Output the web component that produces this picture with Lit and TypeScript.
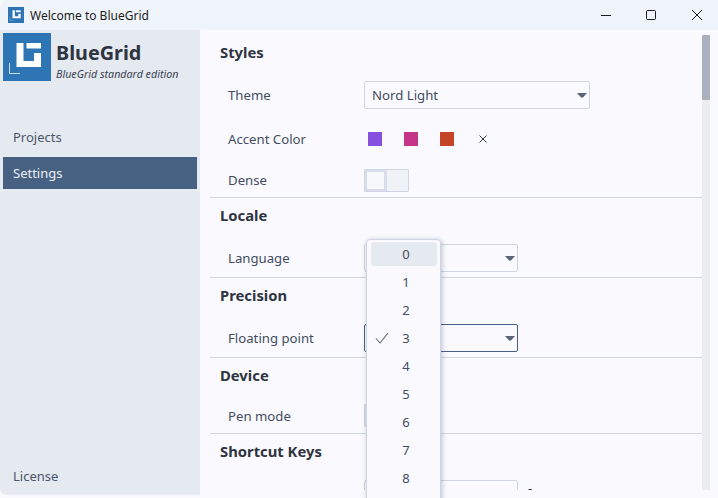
import { LitElement, html, css, svg } from "lit";
import { customElement } from "lit/decorators.js";

const logo = (size: number) => html`<svg width=${size} height=${size} viewBox="0 0 48 48">
  <rect width="48" height="48" fill="#2e75b6"></rect>
  <path d="M13.5 10h7v18h10.500V20h7v14h-24.500z" fill="#fff"></path>
  <path d="M23.500 10h14.500v5.500h-14.500z" fill="#fff"></path>
  <path d="M6.500 30v10.500H17" fill="none" stroke="#fff" stroke-opacity=".75"></path>
</svg>`;

const caret = svg`<path d="M0 0h10L6 4.500h-2z" fill="#5a6478"></path>`;

@customElement("app-root")
export class AppRoot extends LitElement {
  static styles = css`
    :host {
      display: block;
      position: relative;
      width: 718px;
      height: 498px;
      overflow: hidden;
      background: #fafafe;
      color: #2e3440;
      font-family: "Noto Sans", sans-serif;
      font-size: 13px;
    }
    .title {
      height: 30px;
      background: #eff4fa;
      display: flex;
      align-items: center;
      padding-left: 8px;
      gap: 6px;
      font-size: 12px;
      color: #1c1c1c;
      border-top-left-radius: 7px;
    }
    .title svg { display: block; }
    .title .name { flex: 1; }
    .win { display: flex; margin-right: -2px; }
    .win button {
      all: unset;
      width: 45.500px;
      height: 30px;
      display: flex;
      align-items: center;
      justify-content: center;
    }
    .win button:nth-child(2) { transform: translateX(-1px); }
    .body { display: flex; align-items: flex-start; height: 465px; }
    .side {
      width: 200px;
      height: 465px;
      background: #e5e9f0;
      display: flex;
      flex-direction: column;
      border-bottom-left-radius: 7px;
    }
    .brand { display: flex; gap: 5px; padding: 3px 0 0 3px; height: 48px; }
    .brand svg { display: block; }
    .brand-text { display: flex; flex-direction: column; }
    .brand-name { font-size: 19.800px; font-weight: 700; line-height: 27px; margin-top: 6px; }
    .brand-sub { font-size: 10.700px; font-style: italic; line-height: 14px; margin-top: 1px; color: #3b4252; }
    .nav { margin-top: 40px; padding: 0 3px; display: flex; flex-direction: column; gap: 4px; flex: 1; }
    .nav div { height: 32px; line-height: 32px; padding-left: 10px; color: #4c566a; }
    .nav .on { background: #466182; color: #eceff4; }
    .nav .end { margin-top: auto; margin-bottom: 3px; }
    .main { flex: 1; height: 460px; overflow: hidden; position: relative; padding-left: 10px; padding-right: 16px; }
    section { border-bottom: 1px solid #cfd5e2; padding-bottom: 5px; padding-top: 6px; display: flex; flex-direction: column; }
    section:first-child { padding-top: 11px; }
    section:last-child { border-bottom: 0; }
    section.tall { padding-bottom: 6px; }
    h2 {
      margin: 0 0 18px 10px;
      font-size: 14.800px;
      line-height: 22px;
      font-weight: 700;
    }
    .rows { display: flex; flex-direction: column; gap: 16px; }
    .row { display: flex; align-items: center; min-height: 23px; padding-left: 18px; }
    .row label { width: 136px; color: #434c5e; font-size: 13.200px; }
    .row.up label { margin-bottom: 2px; }
    .select {
      box-sizing: border-box;
      width: 154px;
      height: 28px;
      border: 1px solid #cfd5e2;
      border-radius: 2px;
      display: flex;
      align-items: center;
      justify-content: space-between;
      padding: 0 2px 0 7px;
      color: #434c5e;
      font-size: 13.200px;
    }
    .select.wide { width: 226px; }
    .select.focus { border-color: #466182; }
    .swatches { display: flex; align-items: center; height: 28px; gap: 22px; padding-left: 4px; }
    .sw { width: 14px; height: 14px; }
    .sw.a { background: #8450dd; }
    .sw.b { background: #c43487; }
    .sw.c { background: #c44426; }
    .toggle {
      box-sizing: border-box;
      width: 45px;
      height: 23px;
      border: 1px solid #cfd5e2;
      border-radius: 1px;
      background: #eff2f6;
      display: flex;
    }
    .knob {
      width: 17px;
      height: 17px;
      background: #f6f8fa;
      border: 2px solid #d8dee9;
      border-right-width: 3px;
    }
    .short { display: flex; align-items: flex-start; padding-left: 18px; }
    .short label { width: 136px; }
    .input { box-sizing: border-box; width: 154px; height: 28px; border: 1px solid #cfd5e2; border-radius: 2px; flex: none; margin-right: 10px; }
    .dash { line-height: 16px; font-size: 13px; }
    .scroll {
      position: absolute;
      right: 8px;
      top: 5px;
      bottom: 0;
      width: 8px;
      background: #ebecef;
    }
    .thumb { height: 65px; background: #abb0bf; border-radius: 1px; }
    .popup {
      position: absolute;
      left: 366px;
      top: 239px;
      width: 75px;
      height: 290px;
      box-sizing: border-box;
      background: #fafafe;
      border: 1px solid #cfd5e2;
      border-radius: 4px;
      box-shadow: 1px 1px 5px rgba(70, 90, 130, 0.35);
      padding: 2px 3px 0 4px;
      display: flex;
      flex-direction: column;
      gap: 4px;
    }
    .item {
      box-sizing: border-box;
      height: 24px;
      line-height: 24px;
      padding-left: 4px;
      text-align: center;
      border-radius: 4px;
      position: relative;
      color: #434c5e;
      flex: none;
    }
    .item.hi { background: #e5e9f0; }
    .item svg { position: absolute; left: 4px; top: 5px; }
  `;

  render() {
    const items = ["0", "1", "2", "3", "4", "5", "6", "7", "8"];
    return html`
      <div class="title">
        ${logo(16)}
        <span class="name">Welcome to BlueGrid</span>
        <div class="win">
          <button><svg width="12" height="12" viewBox="0 0 12 12"><path d="M1 6.500h10" stroke="#1c1c1c" fill="none"></path></svg></button>
          <button><svg width="12" height="12" viewBox="0 0 12 12"><rect x="1.500" y="1.500" width="9" height="9" rx="1" stroke="#1c1c1c" fill="none"></rect></svg></button>
          <button><svg width="12" height="12" viewBox="0 0 12 12"><path d="M1 1l10 10M11 1L1 11" stroke="#1c1c1c" fill="none"></path></svg></button>
        </div>
      </div>
      <div class="body">
        <aside class="side">
          <div class="brand">
            ${logo(48)}
            <div class="brand-text">
              <span class="brand-name">BlueGrid</span>
              <span class="brand-sub">BlueGrid standard edition</span>
            </div>
          </div>
          <nav class="nav">
            <div>Projects</div>
            <div class="on">Settings</div>
            <div class="end">License</div>
          </nav>
        </aside>
        <main class="main">
          <section>
            <h2>Styles</h2>
            <div class="rows">
              <div class="row"><label>Theme</label>
                <div class="select wide"><span>Nord Light</span><svg width="10" height="5">${caret}</svg></div></div>
              <div class="row"><label>Accent Color</label>
                <div class="swatches"><div class="sw a"></div><div class="sw b"></div><div class="sw c"></div>
                  <svg width="14" height="14" viewBox="0 0 14 14"><path d="M3.500 3.500l7 7M10.500 3.500l-7 7" stroke="#2e3440" fill="none"></path></svg></div></div>
              <div class="row up"><label>Dense</label><div class="toggle"><div class="knob"></div></div></div>
            </div>
          </section>
          <section>
            <h2>Locale</h2>
            <div class="row"><label>Language</label>
              <div class="select"><span></span><svg width="10" height="5">${caret}</svg></div></div>
          </section>
          <section>
            <h2>Precision</h2>
            <div class="row"><label>Floating point</label>
              <div class="select focus"><span></span><svg width="10" height="5">${caret}</svg></div></div>
          </section>
          <section class="tall">
            <h2>Device</h2>
            <div class="row"><label>Pen mode</label><div class="toggle"><div class="knob"></div></div></div>
          </section>
          <section>
            <h2>Shortcut Keys</h2>
            <div class="short"><label></label><div class="input"></div><span class="dash">-</span></div>
          </section>
          <div class="scroll"><div class="thumb"></div></div>
        </main>
      </div>
      <div class="popup">
        ${items.map(
          (n, i) => html`<div class="item ${i === 0 ? "hi" : ""}">
            ${n === "3"
              ? html`<svg width="14" height="14" viewBox="0 0 14 14"><path d="M1 7.500l4 4.500 8-10" fill="none" stroke="#5a6478" stroke-width="1.100"></path></svg>`
              : ""}${n}
          </div>`
        )}
      </div>
    `;
  }
}
